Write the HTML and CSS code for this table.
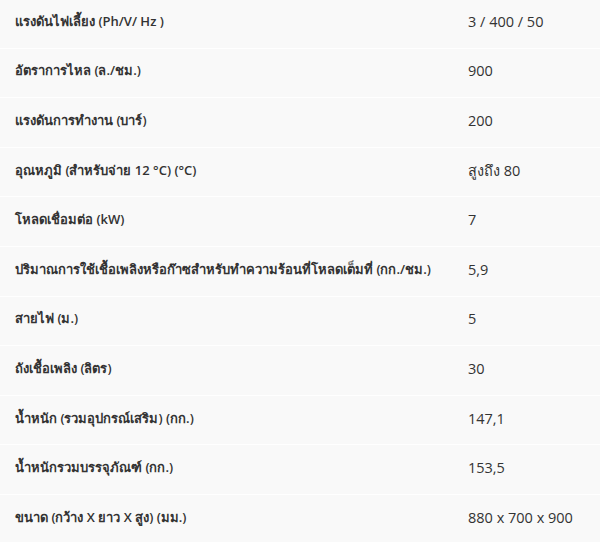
FILE: index.html
```html
<!DOCTYPE html>
<html lang="th">
<head>
<meta charset="utf-8">
<link rel="stylesheet" href="styles.css">
</head>
<body>
<div class="specs">
  <div class="row"><div class="label">แรงดันไฟเลี้ยง (Ph/V/ Hz )</div><div class="value">3 / 400 / 50</div></div>
  <div class="row"><div class="label">อัตราการไหล (ล./ชม.)</div><div class="value">900</div></div>
  <div class="row"><div class="label">แรงดันการทำงาน (บาร์)</div><div class="value">200</div></div>
  <div class="row"><div class="label">อุณหภูมิ (สำหรับจ่าย 12 °C) (°C)</div><div class="value">สูงถึง 80</div></div>
  <div class="row"><div class="label">โหลดเชื่อมต่อ (kW)</div><div class="value">7</div></div>
  <div class="row"><div class="label">ปริมาณการใช้เชื้อเพลิงหรือก๊าซสำหรับทำความร้อนที่โหลดเต็มที่ (กก./ชม.)</div><div class="value">5,9</div></div>
  <div class="row"><div class="label">สายไฟ (ม.)</div><div class="value">5</div></div>
  <div class="row"><div class="label">ถังเชื้อเพลิง (ลิตร)</div><div class="value">30</div></div>
  <div class="row"><div class="label">น้ำหนัก (รวมอุปกรณ์เสริม) (กก.)</div><div class="value">147,1</div></div>
  <div class="row"><div class="label">น้ำหนักรวมบรรจุภัณฑ์ (กก.)</div><div class="value">153,5</div></div>
  <div class="row"><div class="label">ขนาด (กว้าง X ยาว X สูง) (มม.)</div><div class="value">880 x 700 x 900</div></div>
</div>
</body>
</html>
```
FILE: styles.css
```css
html, body {
  margin: 0;
  padding: 0;
  background: #ffffff;
}
body {
  font-family: "Open Sans", "Noto Sans", "DejaVu Sans", sans-serif;
  font-size: 13px;
  color: #333333;
}
.specs {
  display: flex;
  flex-direction: column;
  gap: 1px;
  margin-top: -1px;
}
.row {
  display: grid;
  grid-template-columns: 468px 1fr;
  align-items: center;
  height: 48.6px;
  padding-bottom: 4px;
  box-sizing: border-box;
  background: #f9f9f9;
}
.label {
  padding-left: 15px;
  font-weight: 600;
}
.value {
  font-weight: 400;
  font-size: 14.5px;
}
```
